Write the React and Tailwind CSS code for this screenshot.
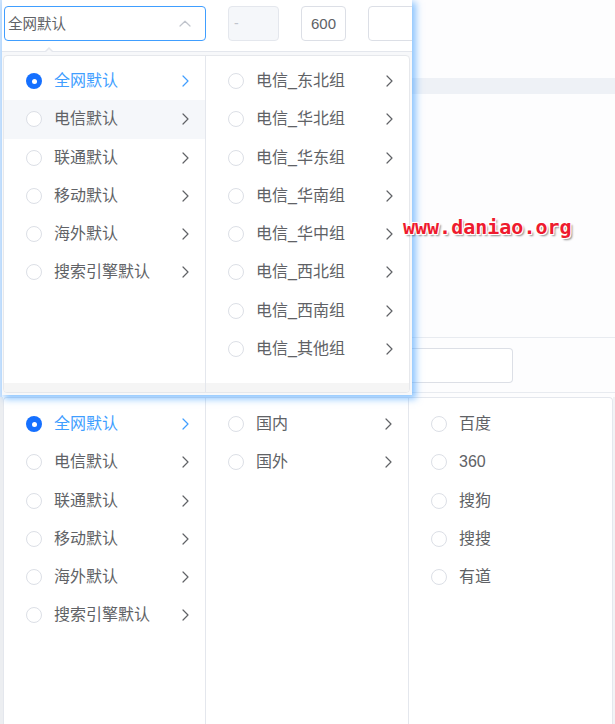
import React from "react";

const FONT = { fontFamily: '"Liberation Sans", "Noto Sans CJK SC", sans-serif' };

function Radio({ checked }) {
  if (checked) {
    return (
      <span className="w-[16px] h-[16px] shrink-0 rounded-full bg-[#1570ff] flex items-center justify-center">
        <span className="w-[5px] h-[5px] rounded-full bg-white" />
      </span>
    );
  }
  return <span className="w-[16px] h-[16px] shrink-0 rounded-full border border-[#dcdfe6] bg-white" />;
}

function Chevron({ blue }) {
  return (
    <svg width="7" height="12" viewBox="0 0 7 12" className={blue ? "text-[#409eff]" : "text-[#606266]"}>
      <path d="M1 1l5 5-5 5" fill="none" stroke="currentColor" strokeWidth="1.2" strokeLinecap="round" strokeLinejoin="round" />
    </svg>
  );
}

function Row({ label, checked, hover, arrow = true }) {
  return (
    <div className={`flex items-center h-[38.25px] pl-[22px] pr-[16px] ${hover ? "bg-[#f5f7fa]" : ""}`}>
      <Radio checked={checked} />
      <span
        className={`ml-[12px] flex-1 text-[16px] leading-[20px] whitespace-nowrap ${
          checked ? "text-[#409eff]" : "text-[#606266]"
        }`}
      >
        {label}
      </span>
      {arrow && <Chevron blue={checked} />}
    </div>
  );
}

const col1 = ["全网默认", "电信默认", "联通默认", "移动默认", "海外默认", "搜索引擎默认"];
const col2 = ["电信_东北组", "电信_华北组", "电信_华东组", "电信_华南组", "电信_华中组", "电信_西北组", "电信_西南组", "电信_其他组"];
const col3 = ["百度", "360", "搜狗", "搜搜", "有道"];

function Col1({ w }) {
  return (
    <div className={w ? "pt-[6px]" : "pt-[7px]"}>
      {col1.map((l, i) => (
        <Row key={l} label={l} checked={i === 0} hover={w && i === 1} />
      ))}
    </div>
  );
}

export default function App() {
  return (
    <div className="relative w-[615px] h-[724px] overflow-hidden bg-white" style={FONT}>
      {/* top region */}
      <div className="flex h-[397px]">
        <div className="w-[2px] bg-[#d3e6fc]" />
        {/* window */}
        <div className="relative z-10 w-[410px] h-[395px] bg-white shadow-[3px_3px_7px_1px_rgba(64,158,255,0.6)] flex flex-col">
          <div className="flex pt-[6px] h-[41px] overflow-hidden">
            <div className="ml-[2px] w-[202px] h-[35px] shrink-0 rounded-[4px] border border-[#409eff] flex items-center pl-[3px]">
              <span className="text-[14.5px] leading-[20px] text-[#606266]">全网默认</span>
              <span className="flex-1" />
              <svg width="12" height="7" viewBox="0 0 12 7" className="mr-[14px]">
                <path d="M1 6L6 1.2 11 6" fill="none" stroke="#c0c4cc" strokeWidth="1.2" strokeLinecap="round" strokeLinejoin="round" />
              </svg>
            </div>
            <div className="ml-[22px] w-[51px] h-[35px] shrink-0 rounded-[4px] border border-[#e4e7ed] bg-[#f5f7fa] flex items-center pl-[5px]">
              <span className="text-[14px] text-[#c0c4cc]">-</span>
            </div>
            <div className="ml-[22px] w-[45px] h-[35px] shrink-0 rounded-[4px] border border-[#dcdfe6] flex items-center justify-center">
              <span className="text-[15px] leading-[20px] text-[#606266]">600</span>
            </div>
            <div className="ml-[22px] w-[60px] h-[35px] shrink-0 rounded-[4px] border border-[#dcdfe6]" />
          </div>
          {/* popper */}
          <div className="relative mt-[10px] flex-1 flex flex-col border-t border-[#e4e7ed] bg-[#f7f8fa] pt-[3px] pl-[1px] pr-[2px]">
            <div className="absolute left-[42px] -top-[5px] w-0 h-0 border-x-[5px] border-x-transparent border-b-[5px] border-b-[#e4e7ed]" />
            <div className="absolute left-[43px] -top-[3.5px] w-0 h-0 border-x-[4px] border-x-transparent border-b-[4px] border-b-[#f7f8fa]" />
            <div className="flex h-[338px] w-[407px] border border-[#e6e8ec] rounded-[4px] bg-white overflow-hidden">
              <div className="w-[202px] border-r border-[#e4e7ed] flex flex-col">
                <div className="flex-1">
                  <Col1 w />
                </div>
                <div className="h-[9px] bg-[#f5f5f5]" />
              </div>
              <div className="flex-1 flex flex-col">
                <div className="flex-1 pt-[6px]">
                  {col2.map((l) => (
                    <Row key={l} label={l} />
                  ))}
                </div>
                <div className="h-[9px] bg-[#f5f5f5]" />
              </div>
            </div>
          </div>
        </div>
        {/* background on the right */}
        <div className="flex-1 flex flex-col bg-[#fdfdfe]">
          <div className="h-[78px]" />
          <div className="h-[16px] bg-[#eef1f6]" />
          <div className="h-[243px]" />
          <div className="h-px bg-[#e8ebf0]" />
          <div className="h-[10px]" />
          <div className="w-[101px] h-[35px] border border-l-0 border-[#dcdfe6] rounded-r-[4px] bg-white" />
          <div className="h-[9px]" />
          <div className="h-px bg-[#e8ebf0]" />
        </div>
      </div>

      {/* bottom region */}
      <div className="flex h-[327px]">
        <div className="w-[3px] bg-[#eceef1]" />
        <div className="w-[610px] flex border border-b-0 border-[#e4e7ed] rounded-t-[4px] bg-white">
          <div className="w-[202px] border-r border-[#e4e7ed]">
            <Col1 />
          </div>
          <div className="w-[203px] border-r border-[#e4e7ed] pt-[7px]">
            <Row label="国内" />
            <Row label="国外" />
          </div>
          <div className="flex-1 pt-[7px]">
            {col3.map((l) => (
              <Row key={l} label={l} arrow={false} />
            ))}
          </div>
        </div>
        <div className="flex-1 bg-[#f2f3f5]" />
      </div>

      {/* watermark overlay */}
      <div
        className="absolute left-[403px] top-[217px] z-20 text-[20px] leading-[20px] font-bold text-[#ee1b2e] whitespace-nowrap [text-shadow:1px_1px_0_#fff,-1px_-1px_0_#fff,1px_-1px_0_#fff,-1px_1px_0_#fff,2px_2px_2px_rgba(0,0,0,0.45)]"
        style={{ fontFamily: '"DejaVu Sans Mono", monospace' }}
      >
        www.daniao.org
      </div>
    </div>
  );
}
